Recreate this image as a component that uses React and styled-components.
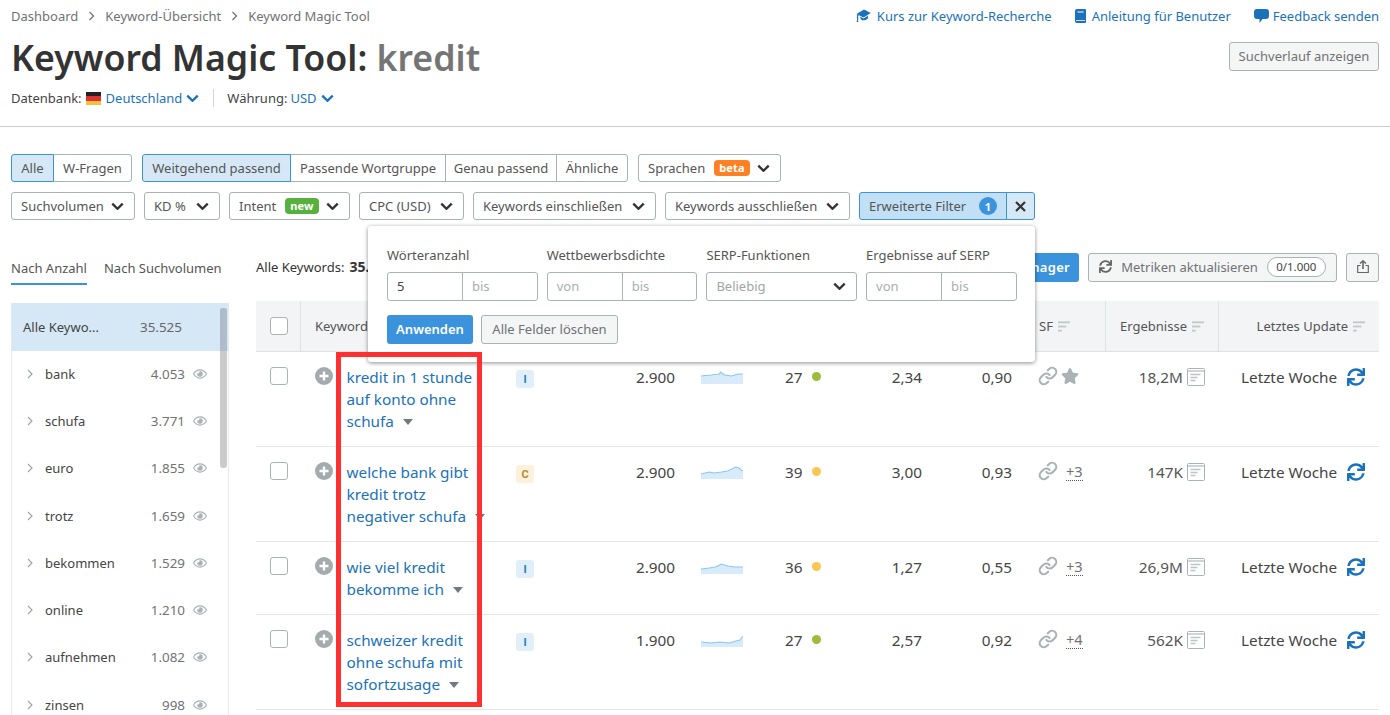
import React from "react";
import styled, { createGlobalStyle } from "styled-components";
import { FaSync, FaStar, FaRegEye } from "react-icons/fa";
import { FiLink } from "react-icons/fi";

const Global = createGlobalStyle`
  html, body { margin: 0; padding: 0; background: #fff; height: 715px; overflow: hidden; }
  body { font-family: "Noto Sans", "Open Sans", sans-serif; font-size: 13px; color: #444; }
  * { box-sizing: border-box; }
`;

const Page = styled.div`position: relative; width: 1390px; height: 715px; overflow: hidden;`;
const Head = styled.header`height: 127px; padding: 0 11px; border-bottom: 1px solid #c9cccd; position: relative;`;
const TopBar = styled.div`display: flex; justify-content: space-between; height: 32px; align-items: center;`;
const Crumbs = styled.nav`display: flex; align-items: center; color: #6f7375; font-size: 13px;`;
const Sep = styled.span`width: 27px; display: flex; justify-content: center;`;
const Links = styled.div`display: flex; gap: 23px; align-items: center;`;
const HelpLink = styled.a`display: flex; align-items: center; gap: ${p => p.$gap || 6}px; color: #1b72bb; font-size: 13px;`;
const TitleRow = styled.div`display: flex; justify-content: space-between; align-items: flex-start; height: 50px;`;
const Title = styled.h1`margin: 0; font-size: 35.7px; line-height: 50px; font-weight: 600; color: #333; letter-spacing: 0;`;
const Query = styled.span`color: #757575;`;
const GhostBtn = styled.button`font: inherit; font-size: 13px; height: 29px; padding: 0 0 2px; width: ${p => p.$w}px; margin-left: ${p => p.$ml || 0}px; color: #6f7375; background: #f4f5f5; border: 1px solid #a9b2b5; border-radius: 3px; margin-top: ${p => p.$mt || 0}px; display: flex; align-items: center; justify-content: center; gap: 9px; flex: none;`;
const Meta = styled.div`display: flex; align-items: center; height: 30px; font-size: 13px; color: #444; margin-top: 1px;`;
const Blue = styled.span`color: #1b72bb; margin-left: ${p => p.$ml || 0}px; display: flex; align-items: center;`;
const VLine = styled.span`width: 1px; height: 18px; background: #d3d6d7; margin: 0 13px 0 14px;`;
const Flag = styled.span`width: 15px; height: 13px; margin: 0 5px 0 4px; background: linear-gradient(#222 0 33%, #d33 33% 66%, #f0c23c 66%); display: inline-block;`;

const Filters = styled.section`padding: 27px 11px 0; display: flex; flex-direction: column; gap: 10px;`;
const FilterRow = styled.div`display: flex; gap: ${p => p.$gap}px; height: 28px;`;
const Seg = styled.div`display: flex;`;
const SegBtn = styled.div`
  width: ${p => p.$w}px; height: 28px; display: flex; align-items: center; justify-content: center; font-size: 13px; color: #555;
  border: 1px solid ${p => p.$on ? "#3b93dd" : "#a9b2b5"}; background: ${p => p.$on ? "#d6e8f6" : "#fff"};
  margin-left: ${p => p.$first ? 0 : -1}px; position: relative; z-index: ${p => p.$on ? 1 : 0};
  border-radius: ${p => p.$first ? "3px 0 0 3px" : p.$last ? "0 3px 3px 0" : "0"};
`;
const Drop = styled.div`
  width: ${p => p.$w}px; height: 28px; display: flex; align-items: center; justify-content: space-between; padding: 0 10px 0 9px;
  font-size: 13px; color: #555; border: 1px solid #a9b2b5; border-radius: 3px; background: #fff;
`;
const Tag = styled.span`font-size: 11px; line-height: 16px; height: 16px; font-weight: 700; color: #fff; background: ${p => p.$c}; border-radius: 4px; padding: 0 5px; margin: 0 auto 0 9px; letter-spacing: .2px;`;
const AdvGroup = styled.div`display: flex;`;
const Adv = styled.div`width: 148px; height: 28px; background: #c1dff5; border: 1px solid #3b93dd; border-radius: 3px 0 0 3px; display: flex; align-items: center; padding: 0 9px; font-size: 13px; color: #555; justify-content: space-between;`;
const AdvClose = styled.div`width: 29px; height: 28px; margin-left: -1px; background: #d6e8f6; border: 1px solid #3b93dd; border-radius: 0 3px 3px 0; display: flex; align-items: center; justify-content: center;`;
const Count = styled.span`width: 18px; height: 18px; border-radius: 50%; background: #3b93dd; color: #fff; font-size: 11px; font-weight: 700; display: flex; align-items: center; justify-content: center;`;

const Main = styled.div`display: grid; grid-template-columns: 218px 1123px; column-gap: 27px; padding: 33px 11px 0;`;
const Side = styled.aside`display: flex; flex-direction: column;`;
const Tabs = styled.div`display: flex; gap: 17px; height: 32px; margin-bottom: 18px;`;
const Tab = styled.div`font-size: 13px; color: #555; height: 32px; line-height: 30px; border-bottom: 2px solid ${p => p.$on ? "#3b93dd" : "transparent"};`;
const SideList = styled.div`position: relative; border: 1px solid #e6eaed; border-width: 0 1px; height: 420px; overflow: hidden;`;
const SideActive = styled.div`height: 48px; background: #d6e8f6; display: flex; align-items: center; padding-left: 11px; font-size: 13px; color: #444;`;
const SideTotal = styled.span`color: #666; font-size: 13.4px; margin-left: 41px;`;
const SideItem = styled.div`height: 47.3px; display: flex; align-items: center; padding: 0 0 2px 15px; font-size: 13px; color: #444;`;
const SideName = styled.span`margin-left: 12px; flex: 1;`;
const SideNum = styled.span`color: #6f7375; margin-right: 8px; font-size: 13.4px;`;
const EyeWrap = styled.span`width: 35px; color: #a9b2b5; display: flex; align-items: center;`;
const Track = styled.div`position: absolute; top: 5px; right: 1px; width: 7px; height: 160px; background: #cacaca; border-radius: 3px;`;
const Thumb = styled.div`height: 43px; background: #aebdc9; border-radius: 3px 3px 0 0;`;

const Content = styled.div`display: flex; flex-direction: column;`;
const ToolBar = styled.div`height: 29px; display: flex; align-items: center; margin-bottom: 19px; font-size: 13px; color: #333;`;
const Total = styled.span`margin-bottom: 2px;`;
const Strong = styled.b`margin-left: 5px; font-size: 14px;`;
const Spacer = styled.div`flex: 1;`;
const PrimaryBtn = styled.div`height: 29px; width: 180px; background: #3b93dd; color: #fff; border-radius: 3px; display: flex; align-items: center; justify-content: flex-end; padding: 0 9px 2px 0; font-size: 13px; font-weight: 600; letter-spacing: .3px;`;
const Pill = styled.span`border: 1px solid #a9b2b5; border-radius: 10px; height: 20px; width: 59px; justify-content: center; font-size: 11.5px; color: #444; background: #fff; display: flex; align-items: center;`;

const cols = "44px 36px 169px 95px 80px 80px 100px 67px 90px 88px 113px 161px";
const THead = styled.div`display: grid; grid-template-columns: ${cols}; height: 51px; background: #f3f4f5; border-bottom: 1px solid #dfe2e4; font-size: 13px; color: #555;`;
const HCell = styled.div`display: flex; align-items: center; justify-content: ${p => p.$end ? "flex-end" : "flex-start"}; padding: 0 ${p => p.$pr || 0}px 0 ${p => p.$pl || 0}px; grid-column: ${p => p.$span || "auto"}; border-left: ${p => p.$line ? "1px solid #dfe2e4" : "0"}; gap: 5px;`;
const Row = styled.div`display: grid; grid-template-columns: ${cols}; padding: 14px 0 14px; border-bottom: 1px solid #e4e6e8; font-size: 15.3px; color: #444; align-items: start;`;
const Cell = styled.div`height: 22px; display: flex; align-items: center; justify-content: ${p => p.$end ? "flex-end" : "flex-start"}; padding: 0 ${p => p.$pr || 0}px 0 ${p => p.$pl || 0}px; gap: ${p => p.$gap || 0}px; margin-top: ${p => p.$up ? -1 : 0}px;`;
const Box = styled.span`width: 18px; height: 18px; border: 1px solid #a9b2b5; border-radius: 3px; background: #fff; display: block;`;
const KwCell = styled.div`padding-left: 10.5px; line-height: 22px; color: #1b72bb; font-size: 15.3px; white-space: nowrap; position: relative;`;
const Caret = styled.span`display: inline-block; width: 0; height: 0; border: 5.5px solid transparent; border-top: 6px solid #6f7b80; border-bottom: 0; margin-left: 9px; vertical-align: 2px;`;
const Intent = styled.span`width: 18px; height: 18px; border-radius: 3px; font-family: Roboto, sans-serif; font-size: 11px; font-weight: 700; display: flex; align-items: center; justify-content: center; margin-top: 4px; color: ${p => p.$k === "C" ? "#b98a2c" : "#2a7cc0"}; background: ${p => p.$k === "C" ? "#fbf1dc" : "#e0effa"};`;
const Dot = styled.span`width: 9px; height: 9px; border-radius: 50%; background: ${p => p.$c}; margin-bottom: 1px;`;
const More = styled.span`font-size: 14.6px; color: #6f7375; border-bottom: 1px dotted #555; line-height: 17px; margin-left: 5px; margin-top: 2px;`;
const Muted = styled.span`color: #555;`;

const Pop = styled.div`position: absolute; left: 368px; top: 226px; width: 667px; height: 136px; background: #fff; border-radius: 3px; box-shadow: 0 1px 4px rgba(0,0,0,.45); padding: 20px 19px 0; z-index: 5;`;
const PopGrid = styled.div`display: grid; grid-template-columns: repeat(4, 150.7px); column-gap: 9px; margin-bottom: 14px;`;
const PopField = styled.div`display: flex; flex-direction: column; gap: 7px;`;
const PopLabel = styled.div`font-size: 13px; line-height: 19px; color: #555;`;
const Pair = styled.div`display: grid; grid-template-columns: 74px 1fr; height: 29px; border: 1px solid #a9b2b5; border-radius: 3px;`;
const PairCell = styled.div`font-size: 13px; color: ${p => p.$v ? "#444" : "#a9aeb0"}; display: flex; align-items: center; padding: 0 0 1px 9px; border-left: ${p => p.$sep ? "1px solid #a9b2b5" : "0"};`;
const Select = styled.div`height: 29px; border: 1px solid #a9b2b5; border-radius: 3px; display: flex; align-items: center; justify-content: space-between; padding: 0 10px 1px 9px; font-size: 13px; color: #a0a5a7;`;
const PopActions = styled.div`display: flex; gap: 8px;`;
const Apply = styled.div`width: 86px; height: 29px; background: #3b93dd; border-radius: 3px; color: #fff; font-weight: 600; font-size: 13px; display: flex; align-items: center; justify-content: center; padding-bottom: 2px;`;

const RedBox = styled.div`position: absolute; left: 336px; top: 352px; width: 146px; height: 355px; border: 5px solid #ff3030; z-index: 6; pointer-events: none;`;

const Chev = ({ c = "#333", w = 13 }) => (
  <svg width={w} height={w * 0.67} viewBox="0 0 12 8"><path d="M1.2 1.5 6 6.2l4.8-4.7" fill="none" stroke={c} strokeWidth="2.2" /></svg>
);
const Crumb = () => (
  <svg width="7" height="10" viewBox="0 0 7 10"><path d="M1.5 1 5.5 5l-4 4" fill="none" stroke="#777" strokeWidth="1.4" /></svg>
);
const SideChev = () => (
  <svg width="6" height="10" viewBox="0 0 6 10"><path d="M1 1l4 4-4 4" fill="none" stroke="#9aa3a6" strokeWidth="1.1" /></svg>
);
const Sort = () => (
  <svg width="12" height="11" viewBox="0 0 13 11" fill="#c3c8ca"><rect width="13" height="2" /><rect y="4.5" width="9" height="2" /><rect y="9" width="4" height="2" /></svg>
);
const Plus = () => (
  <svg width="18" height="18" viewBox="0 0 18 18"><circle cx="9" cy="9" r="9" fill="#a4abad" /><path d="M9 4.5v9M4.5 9h9" stroke="#fff" strokeWidth="2.4" /></svg>
);
const Serp = () => (
  <svg width="18" height="18" viewBox="0 0 18 18" fill="none"><rect x=".5" y=".5" width="17" height="17" rx="1" stroke="#a9b2b5" /><path d="M1 3h16" stroke="#c5cacc" strokeWidth="1.6" /><path d="M3.5 6.5h10M3.5 9.5h7M3.5 12.5h5" stroke="#bcc3c5" strokeWidth="1.3" /></svg>
);
const Cap = () => (
  <svg width="15" height="14" viewBox="0 0 15 14" fill="#1b72bb"><path d="M0.5 5 8 .6 14.8 4 7.6 8.4 3 6.2v.6L1.8 6.1z" /><path d="M4 7.6 7.6 9.5l4.4-2.7v2.4c-1.2 1.8-5 3-7 1.2z" /><rect x="1" y="6" width="1.2" height="5" /><path d="M.5 13l1-3 1 3z" /></svg>
);
const Book = () => (
  <svg width="11" height="14" viewBox="0 0 11 14"><path d="M2 0h8a1 1 0 0 1 1 1v12a1 1 0 0 1-1 1H2a2 2 0 0 1-2-2V2a2 2 0 0 1 2-2z" fill="#1b72bb" /><path d="M2.5 3h6" stroke="#fff" strokeWidth="1" /><path d="M1 11.5h9" stroke="#fff" strokeWidth=".8" /></svg>
);
const Bubble = () => (
  <svg width="15" height="15" viewBox="0 0 15 15"><path d="M3 0h9a3 3 0 0 1 3 3v4a3 3 0 0 1-3 3H8.5L5.5 14V10H3a3 3 0 0 1-3-3V3a3 3 0 0 1 3-3z" fill="#1b72bb" /></svg>
);
const Upload = () => (
  <svg width="12" height="13" viewBox="0 0 12 13" fill="none" stroke="#666" strokeWidth="1.2"><path d="M3.5 5.5H.7v7h10.6v-7H8.5" /><path d="M6 9V1" strokeWidth="1.6" /><path d="M3 3.6 6 .8l3 2.8" strokeWidth="1.4" /></svg>
);
const Spark = ({ pts }) => {
  const line = pts.map(p => p.join(",")).join(" ");
  return (
    <svg width="42" height="13" viewBox="0 0 41 13" preserveAspectRatio="none">
      <polygon points={`0,13 ${line} 41,13`} fill="#d8ebfb" />
      <polyline points={line} fill="none" stroke="#8cc4f3" strokeWidth="1" />
    </svg>
  );
};

const sideItems = [["bank","4.053"],["schufa","3.771"],["euro","1.855"],["trotz","1.659"],["bekommen","1.529"],["online","1.210"],["aufnehmen","1.082"],["zinsen","998"]];
const rows = [
  { lines: ["kredit in 1 stunde","auf konto ohne","schufa"], i:"I", v:"2.900", s:[[0,5],[10,4],[18,3],[19,1],[23,4],[30,5],[36,3],[41,3]], kd:"27", dc:"#9fbb39", cpc:"2,34", com:"0,90", star:true, res:"18,2M" },
  { lines: ["welche bank gibt","kredit trotz","negativer schufa"], i:"C", v:"2.900", s:[[0,8],[8,6],[13,7],[20,6],[26,5],[34,1],[37,2],[41,5]], kd:"39", dc:"#fcc652", cpc:"3,00", com:"0,93", more:"+3", res:"147K" },
  { lines: ["wie viel kredit","bekomme ich"], i:"I", v:"2.900", s:[[0,8],[8,7],[14,6],[20,3],[26,5],[33,6],[41,6]], kd:"36", dc:"#fcc652", cpc:"1,27", com:"0,55", more:"+3", res:"26,9M" },
  { lines: ["schweizer kredit","ohne schufa mit","sofortzusage"], i:"I", v:"1.900", s:[[0,8],[10,9],[18,8],[28,9],[34,7],[38,6],[41,2]], kd:"27", dc:"#9fbb39", cpc:"2,57", com:"0,92", more:"+4", res:"562K" },
];

export default function App() {
  return (
    <Page>
      <Global />
      <Head>
        <TopBar>
          <Crumbs>Dashboard<Sep><Crumb /></Sep>Keyword-Übersicht<Sep><Crumb /></Sep>Keyword Magic Tool</Crumbs>
          <Links>
            <HelpLink $gap={6}><Cap />Kurs zur Keyword-Recherche</HelpLink>
            <HelpLink $gap={6}><Book />Anleitung für Benutzer</HelpLink>
            <HelpLink $gap={4}><Bubble />Feedback senden</HelpLink>
          </Links>
        </TopBar>
        <TitleRow>
          <Title>Keyword Magic Tool: <Query>kredit</Query></Title>
          <GhostBtn $w={150} $mt={10}>Suchverlauf anzeigen</GhostBtn>
        </TitleRow>
        <Meta>
          Datenbank:<Flag /><Blue>Deutschland</Blue><Blue $ml={4}><Chev c="#1b72bb" /></Blue>
          <VLine />
          Währung:<Blue $ml={3}>USD</Blue><Blue $ml={4}><Chev c="#1b72bb" /></Blue>
        </Meta>
      </Head>

      <Filters>
        <FilterRow $gap={10}>
          <Seg>
            <SegBtn $w={43} $first $on>Alle</SegBtn>
            <SegBtn $w={79} $last>W-Fragen</SegBtn>
          </Seg>
          <Seg>
            <SegBtn $w={149} $first $on>Weitgehend passend</SegBtn>
            <SegBtn $w={156}>Passende Wortgruppe</SegBtn>
            <SegBtn $w={112}>Genau passend</SegBtn>
            <SegBtn $w={72} $last>Ähnliche</SegBtn>
          </Seg>
          <Drop $w={143}>Sprachen<Tag $c="#ff8124">beta</Tag><Chev /></Drop>
        </FilterRow>
        <FilterRow $gap={9}>
          <Drop $w={124}>Suchvolumen<Chev /></Drop>
          <Drop $w={76}>KD %<Chev /></Drop>
          <Drop $w={121}>Intent<Tag $c="#58b13f">new</Tag><Chev /></Drop>
          <Drop $w={105}>CPC (USD)<Chev /></Drop>
          <Drop $w={183}>Keywords einschließen<Chev /></Drop>
          <Drop $w={185}>Keywords ausschließen<Chev /></Drop>
          <AdvGroup>
            <Adv>Erweiterte Filter<Count>1</Count></Adv>
            <AdvClose>
              <svg width="11" height="11" viewBox="0 0 11 11"><path d="M1 1l9 9M10 1l-9 9" stroke="#333" strokeWidth="2.2" /></svg>
            </AdvClose>
          </AdvGroup>
        </FilterRow>
      </Filters>

      <Main>
        <Side>
          <Tabs>
            <Tab $on>Nach Anzahl</Tab>
            <Tab>Nach Suchvolumen</Tab>
          </Tabs>
          <SideList>
            <SideActive>Alle Keywo...<SideTotal>35.525</SideTotal></SideActive>
            {sideItems.map(([n, c]) => (
              <SideItem key={n}>
                <SideChev />
                <SideName>{n}</SideName>
                <SideNum>{c}</SideNum>
                <EyeWrap><FaRegEye size={14} /></EyeWrap>
              </SideItem>
            ))}
            <Track><Thumb /></Track>
          </SideList>
        </Side>

        <Content>
          <ToolBar>
            <Total>Alle Keywords:<Strong>35.525</Strong></Total>
            <Spacer />
            <PrimaryBtn>Manager</PrimaryBtn>
            <GhostBtn $w={249} $ml={9}>
              <FaSync size={13} color="#666" />Metriken aktualisieren<Pill>0/1.000</Pill>
            </GhostBtn>
            <GhostBtn $w={33} $ml={9}><Upload /></GhostBtn>
          </ToolBar>
          <THead>
            <HCell $pl={14}><Box /></HCell>
            <HCell $span="span 3" $pl={14} $line>Keyword</HCell>
            <HCell />
            <HCell />
            <HCell />
            <HCell />
            <HCell />
            <HCell $pl={22}>SF<Sort /></HCell>
            <HCell $line $end $pr={14}>Ergebnisse<Sort /></HCell>
            <HCell $line $end $pr={14}>Letztes Update<Sort /></HCell>
          </THead>
          {rows.map((r, idx) => (
            <Row key={idx}>
              <Cell $pl={14} $up><Box /></Cell>
              <Cell $pl={15} $up><Plus /></Cell>
              <KwCell>
                {r.lines.map((l, i) => (
                  <React.Fragment key={i}>
                    {l}
                    {i === r.lines.length - 1 ? <Caret /> : <br />}
                  </React.Fragment>
                ))}
              </KwCell>
              <Cell $pl={11}><Intent $k={r.i}>{r.i}</Intent></Cell>
              <Cell $end $pr={5}>{r.v}</Cell>
              <Cell $pl={21}><Spark pts={r.s} /></Cell>
              <Cell $pl={25} $gap={9}>{r.kd}<Dot $c={r.dc} /></Cell>
              <Cell $end $pr={5}>{r.cpc}</Cell>
              <Cell $end $pr={5}>{r.com}</Cell>
              <Cell $pl={21} $gap={3} $up>
                <FiLink size={20} color="#a9b2b5" strokeWidth={2.5} />
                {r.star ? <FaStar size={18} color="#a9b2b5" /> : <More>{r.more}</More>}
              </Cell>
              <Cell $end $pr={13} $gap={4}><Muted>{r.res}</Muted><Serp /></Cell>
              <Cell $pl={23} $gap={10}>Letzte Woche<FaSync size={18} color="#1b72bb" /></Cell>
            </Row>
          ))}
        </Content>
      </Main>

      <Pop>
        <PopGrid>
          <PopField>
            <PopLabel>Wörteranzahl</PopLabel>
            <Pair><PairCell $v>5</PairCell><PairCell $sep>bis</PairCell></Pair>
          </PopField>
          <PopField>
            <PopLabel>Wettbewerbsdichte</PopLabel>
            <Pair><PairCell>von</PairCell><PairCell $sep>bis</PairCell></Pair>
          </PopField>
          <PopField>
            <PopLabel>SERP-Funktionen</PopLabel>
            <Select>Beliebig<Chev /></Select>
          </PopField>
          <PopField>
            <PopLabel>Ergebnisse auf SERP</PopLabel>
            <Pair><PairCell>von</PairCell><PairCell $sep>bis</PairCell></Pair>
          </PopField>
        </PopGrid>
        <PopActions>
          <Apply>Anwenden</Apply>
          <GhostBtn $w={137}>Alle Felder löschen</GhostBtn>
        </PopActions>
      </Pop>
      <RedBox />
    </Page>
  );
}
